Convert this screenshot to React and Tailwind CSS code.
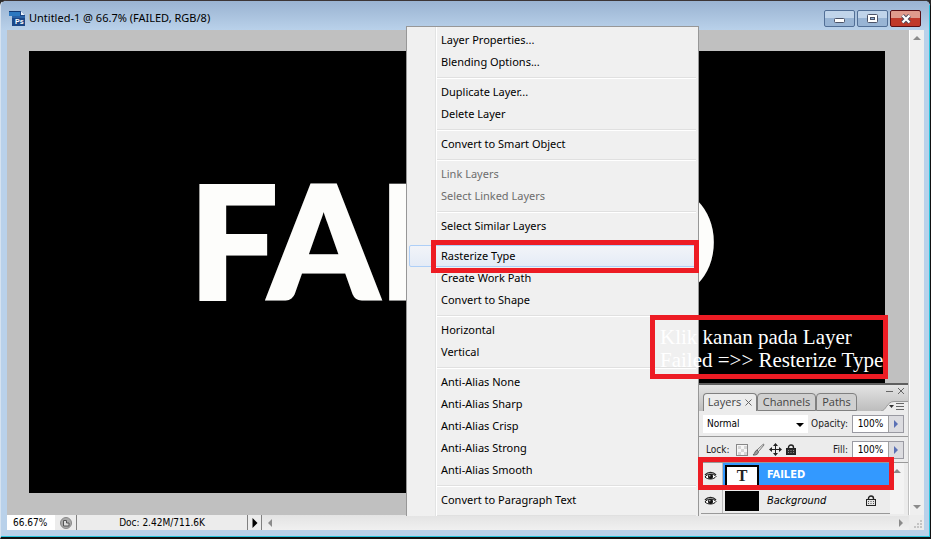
import React, { useState } from 'react'

const menuGroups = [
  ['Layer Properties...', 'Blending Options...'],
  ['Duplicate Layer...', 'Delete Layer'],
  ['Convert to Smart Object'],
  ['Link Layers', 'Select Linked Layers'],
  ['Select Similar Layers'],
  ['Rasterize Type', 'Create Work Path', 'Convert to Shape'],
  ['Horizontal', 'Vertical'],
  ['Anti-Alias None', 'Anti-Alias Sharp', 'Anti-Alias Crisp', 'Anti-Alias Strong', 'Anti-Alias Smooth'],
  ['Convert to Paragraph Text']
]

const disabledItems = ['Link Layers', 'Select Linked Layers']

const arrowPaths = {
  up: 'M4 2l4 4H0z',
  down: 'M4 6l4-4H0z',
  left: 'M2 4l4-4v8z',
  right: 'M6 4L2 0v8z'
}

const Arrow = ({ dir, color = '#8b8b8b', size = 8 }) => (
  <svg width={size} height={size} viewBox="0 0 8 8" className="shrink-0" aria-hidden="true">
    <path d={arrowPaths[dir]} fill={color} />
  </svg>
)

const PsIcon = () => (
  <svg width="16" height="17" viewBox="0 0 16 17" aria-hidden="true">
    <path d="M3 1h9l4 4v11H3z" fill="#1b4686" />
    <path d="M3 6h13v10H3z" fill="#1a4788" />
    <path d="M3 6h13v2H3z" fill="#2861a6" />
    <path d="M12 1l4 4h-4z" fill="#e8f1fb" />
    <path d="M0 1h11v5H0z" fill="#2c78c0" />
    <path d="M0 1h11v1H0z" fill="#123a74" />
    <text x="6" y="14" fontSize="7" fontWeight="bold" fill="#fff" fontFamily="Liberation Sans, sans-serif">Ps</text>
  </svg>
)

const EyeIcon = () => (
  <svg width="13" height="10" viewBox="0 0 13 10" aria-hidden="true">
    <path d="M1 6C3 2.500 9.500 2 12 5.500 10 8.500 4 9 1 6z" fill="#fff" stroke="#111" />
    <path d="M1 4C4 .5 9 .5 12 4" fill="none" stroke="#222" strokeWidth="1.300" />
    <circle cx="6.500" cy="5.500" r="2.500" fill="#111" />
    <circle cx="5.800" cy="4.800" r=".7" fill="#ddd" />
  </svg>
)

const LockIcon = ({ hollow }) => (
  <svg width="10" height="12" viewBox="0 0 10 12" aria-hidden="true">
    <path d="M2.500 5V3.500a2.500 2.500 0 0 1 5 0V5" fill="none" stroke="#222" strokeWidth="1.400" />
    <rect x=".5" y="4.500" width="9" height="6" fill={hollow ? '#e4e4e4' : '#2c2c2c'} stroke="#222" />
    <path d="M2 6.500h1M4.500 6.500h1M7 6.500h1M2 8.500h1M4.500 8.500h1M7 8.500h1" stroke={hollow ? '#555' : '#888'} />
  </svg>
)

const PixelsIcon = () => (
  <svg width="12" height="12" viewBox="0 0 12 12" aria-hidden="true">
    <rect x=".5" y=".5" width="11" height="11" fill="#f6f6f6" stroke="#888" />
    <path d="M2 2h3v3H2zM8 2h3v3H8zM5 5h3v3H5zM2 8h3v3H2zM8 8h3v3H8z" fill="#d6d6d6" />
  </svg>
)

const BrushIcon = () => (
  <svg width="13" height="13" viewBox="0 0 13 13" aria-hidden="true">
    <path d="M11.500 1L5 7l1.500 1.500L12 2z" fill="#eee" stroke="#777" />
    <path d="M5 7C3 7.500 3 10.500 1 12c3 .3 5.500-.8 5.500-3.500z" fill="#999" stroke="#666" />
  </svg>
)

const MoveIcon = () => (
  <svg width="13" height="13" viewBox="0 0 13 13" aria-hidden="true">
    <path d="M6.500 1v11M1 6.500h11" stroke="#222" />
    <path d="M6.500 0L9 3H4zM6.500 13L9 10H4zM0 6.500L3 4v5zM13 6.500L10 4v5z" fill="#222" />
  </svg>
)

const TitleBar = () => (
  <header className="flex h-[29px] shrink-0 items-center bg-linear-to-b from-[#9ab3d1] to-[#b9d1ea] pt-1.5 pr-[9px] pl-2">
    <PsIcon />
    <h1 className="ml-1 flex-1 font-['Noto_Sans',sans-serif] text-[11px] text-black">Untitled-1 @ 66.7% (FAILED, RGB/8)</h1>
    <div className="flex gap-0.5">
      <button aria-label="Minimize" className="flex h-[17px] w-[31px] items-center justify-center rounded-xs border border-[#526f96] bg-linear-to-b from-[#c0d4ea] from-50% to-[#98b4d4] to-50%">
        <svg width="11" height="9" viewBox="0 0 11 9">
          <rect x=".5" y="4.500" width="10" height="4" rx="1" fill="#fff" stroke="#4b5368" />
        </svg>
      </button>
      <button aria-label="Maximize" className="flex h-[17px] w-[31px] items-center justify-center rounded-xs border border-[#526f96] bg-linear-to-b from-[#c0d4ea] from-50% to-[#98b4d4] to-50%">
        <svg width="11" height="9" viewBox="0 0 11 9">
          <rect x=".5" y=".5" width="10" height="8" rx="1" fill="#fff" stroke="#4b5368" />
          <rect x="3.500" y="3.500" width="4" height="2" fill="#8fb0d8" stroke="#4b5368" />
        </svg>
      </button>
      <button aria-label="Close" className="flex h-[17px] w-[31px] items-center justify-center rounded-xs border border-[#5a0e14] bg-linear-to-b from-[#e09a8c] from-50% to-[#c0392a] to-50%">
        <svg width="12" height="10" viewBox="0 0 12 10">
          <path d="M2.500 1.500l7 7M9.500 1.500l-7 7" stroke="#4b4a5c" strokeWidth="4" />
          <path d="M2.500 1.500l7 7M9.500 1.500l-7 7" stroke="#fff" strokeWidth="2.300" />
        </svg>
      </button>
    </div>
  </header>
)

const StatusBar = () => (
  <footer className="mx-1.5 flex h-[15px] shrink-0 items-stretch bg-[#ececec] font-['DejaVu_Sans_Condensed','DejaVu_Sans',sans-serif] text-[10px] leading-[15px] text-black">
    <input aria-label="Zoom" defaultValue="66.67%" className="w-12 bg-white px-1.5" />
    <button aria-label="Version history" className="flex w-[21px] items-center justify-center">
      <svg width="12" height="12" viewBox="0 0 12 12">
        <circle cx="6" cy="6" r="5.500" fill="#aaa" stroke="#888" />
        <path d="M3.500 9V3.500h3V6H9v3z" fill="#ddd" stroke="#555" />
      </svg>
    </button>
    <div className="w-[172px] border-x border-[#808080] text-center">Doc: 2.42M/711.6K</div>
    <button aria-label="Status options" className="flex w-3.5 items-center justify-center border-r border-[#808080]">
      <Arrow dir="right" color="#000" size={10} />
    </button>
    <div className="flex flex-1 items-center justify-between bg-linear-to-b from-[#e3e3e3] to-[#f0f0f0] px-1">
      <Arrow dir="left" />
      <Arrow dir="right" />
    </div>
    <svg width="15" height="15" viewBox="0 0 15 15" aria-hidden="true">
      <path d="M11 6h2M8 9h2M11 9h2M5 12h2M8 12h2M11 12h2" stroke="#c4c4c4" strokeWidth="2" />
    </svg>
  </footer>
)

const ContextMenu = () => (
  <div role="menu" className="absolute top-[25px] left-[405px] h-[490px] w-[293px] overflow-hidden border border-b-0 border-[#979797] bg-[#f0f0f0] px-0.5 pt-0.5 text-black">
    <span className="absolute top-0 left-[28px] h-full w-0.5 border-l border-[#e2e3e3] bg-white" />
    {menuGroups.map((group) => (
      <div key={group[0]} className="relative">
        {group.map((item) => (
          <button
            key={item}
            role="menuitem"
            disabled={disabledItems.includes(item)}
            className={`flex h-[22px] w-full items-center rounded-xs border pl-[31px] text-left font-['Noto_Sans',sans-serif] text-[11px] disabled:text-[#6d6d6d] ${
              item === 'Rasterize Type'
                ? 'border-[#aecff7] bg-linear-to-b from-[#f2f4f8] to-[#e4ebf6]'
                : 'border-transparent'
            }`}
          >
            {item}
          </button>
        ))}
        <div className="h-2 pt-1 pl-7">
          <div className="h-0.5 border-t border-[#e0e0e0] bg-white" />
        </div>
      </div>
    ))}
  </div>
)

const Percent = ({ id, label }) => (
  <div className="flex items-center gap-1">
    <label htmlFor={id}>{label}</label>
    <div className="flex h-[18px] w-[52px] border border-[#9a9aa2] bg-white text-black">
      <input id={id} defaultValue="100%" className="w-[35px] bg-transparent text-center" />
      <button aria-label={`${label} slider`} className="flex flex-1 items-center justify-center border-l border-[#a0a0a0] bg-[#dcdce0]">
        <Arrow dir="right" color="#5a70b5" />
      </button>
    </div>
  </div>
)

const LayersPanel = () => {
  const [selected, setSelected] = useState('FAILED')

  return (
    <section className="absolute right-[22px] bottom-[21px] w-[209px] border-t-2 border-[#5f5f5f] bg-[#ececec] pb-0.5 font-['DejaVu_Sans_Condensed','DejaVu_Sans',sans-serif] text-[10px] text-[#222]">
      {/* Tabs */}
      <div className="flex h-[26px] items-end bg-linear-to-b from-[#e4e4e4] to-[#bdbdbd] pl-1 font-['Open_Sans',sans-serif] text-[11px] text-[#444]">
        <button className="flex h-[18px] w-[54px] items-center justify-center gap-1 rounded-t border border-b-0 border-[#808080] bg-[#ececec]">
          Layers
          <svg width="7" height="7" viewBox="0 0 7 7" aria-hidden="true">
            <path d="M.5 .5l6 6M6.500 .5l-6 6" stroke="#666" />
          </svg>
        </button>
        <button className="h-[18px] w-[59px] rounded-t border border-[#808080] bg-[#d0d0d0] leading-[16px]">Channels</button>
        <button className="h-[18px] w-[41px] rounded-t border border-[#808080] bg-[#d0d0d0] leading-[16px]">Paths</button>
        <svg className="ml-auto" width="30" height="26" viewBox="0 0 30 26" aria-hidden="true">
          <path d="M8 6.500h7M20 3l6 6M26 3l-6 6" stroke="#666" fill="none" />
          <path d="M3 26C8 26 9 16.500 16 16.500h15V27H3z" fill="#ececec" stroke="#999" />
          <path d="M11 20h5l-2.500 3z" fill="#333" />
          <path d="M18 18.500h8M18 21.500h8M18 24.500h8" stroke="#666" />
        </svg>
      </div>

      {/* Blending */}
      <div className="flex h-[26px] items-center justify-between border-b border-[#999] pr-1 pl-1">
        <div className="relative">
          <select aria-label="Blend mode" className="h-[18px] w-[105px] appearance-none bg-white px-1 text-black">
            <option>Normal</option>
          </select>
          <span className="pointer-events-none absolute top-1.5 right-1">
            <Arrow dir="down" color="#000" />
          </span>
        </div>
        <Percent id="opacity" label="Opacity:" />
      </div>

      {/* Locks */}
      <div className="flex h-[26px] items-center justify-between border-b border-[#999] pr-1 pl-[7px]">
        <div className="flex items-center gap-1">
          <span className="mr-0.5">Lock:</span>
          <PixelsIcon />
          <BrushIcon />
          <MoveIcon />
          <LockIcon />
        </div>
        <Percent id="fill" label="Fill:" />
      </div>

      {/* Layers */}
      <div className="flex pr-1 pl-0.5">
        <ul className="flex-1">
          <li className="flex h-[26px] items-center border-b border-[#999]">
            <button aria-label="Toggle FAILED" className="flex h-full w-[22px] items-center justify-center border-r border-[#bbb] pr-0.5">
              <EyeIcon />
            </button>
            <button onClick={() => setSelected('FAILED')} className={`flex h-full flex-1 items-center gap-2 pl-0.5 text-[11px] font-bold ${selected === 'FAILED' ? 'bg-[#3399ff] text-white' : ''}`}>
              <span className="flex h-[22px] w-[34px] items-center justify-center border-2 border-black bg-white font-['Liberation_Serif',serif] text-base text-[#222]">T</span>
              FAILED
            </button>
          </li>
          <li className="flex h-[25px] items-center border-b border-[#999]">
            <button aria-label="Toggle Background" className="flex h-full w-[22px] items-center justify-center border-r border-[#bbb] pr-0.5">
              <EyeIcon />
            </button>
            <button onClick={() => setSelected('Background')} className={`flex h-full flex-1 items-center gap-2 pr-3.5 pl-0.5 text-[11px] text-black italic ${selected === 'Background' ? 'bg-[#3399ff]' : ''}`}>
              <span className="h-5 w-[34px] bg-black" />
              <span className="flex-1 text-left">Background</span>
              <LockIcon hollow />
            </button>
          </li>
        </ul>
        <div className="flex w-3.5 justify-center bg-[#f3f3f3] pt-1">
          <Arrow dir="up" />
        </div>
      </div>
    </section>
  )
}

const App = () => (
  <div className="h-screen overflow-hidden bg-[#2b2b2b]">
    <div className="relative flex h-full flex-col overflow-hidden rounded-t-md border border-b-2 border-t-[#3c3535] border-r-[#111] border-b-[#111] border-l-[#d5e2f0] bg-[#b9d1ea] font-['Open_Sans',sans-serif]">
      <TitleBar />
      <main className="mx-1.5 flex flex-1 bg-[#c0c0c0]">
        <div className="mt-[21px] mr-6 mb-[22px] ml-[22px] flex flex-1 items-start bg-black pt-[109px] pl-40">
          <p className="font-['Lato',sans-serif] text-[157px] leading-none font-black text-[#fdfdfb] [-webkit-text-stroke:3px_#fdfdfb]">FAILED</p>
        </div>
        <div className="flex w-[15px] flex-col items-center justify-between border-l border-white bg-[#efefef] py-1">
          <Arrow dir="up" />
          <Arrow dir="down" />
        </div>
      </main>
      <StatusBar />
      <div className="h-[7px] shrink-0 border-b border-[#27c4dd]" />
      <span className="absolute top-1 right-0 bottom-0 w-px bg-[#27c4dd]" />

      <LayersPanel />
      <ContextMenu />

      {/* Callouts */}
      <div className="absolute top-[239px] left-[430px] h-[33px] w-[268px] border-5 border-[#ed1c24]" />
      <div className="absolute right-[36px] bottom-[47px] h-[33px] w-[196px] border-5 border-[#ed1c24]" />
      <p className="absolute top-[314px] left-[649px] h-16 w-[238px] border-5 border-[#ed1c24] px-[5px] pt-1.5 font-['Liberation_Serif',serif] text-[21px] leading-[23px] whitespace-nowrap text-white">
        Klik kanan pada Layer
        <br />
        Failed =&gt;&gt; Resterize Type
      </p>
    </div>
  </div>
)

export default App
